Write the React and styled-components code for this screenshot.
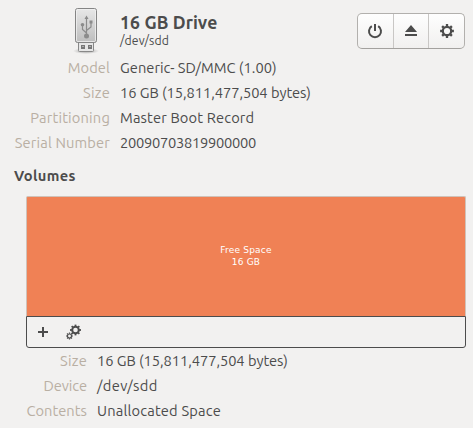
import React from 'react';
import styled, { createGlobalStyle } from 'styled-components';

const GlobalStyle = createGlobalStyle`
  * { box-sizing: border-box; }
  body {
    margin: 0;
    background: #f2f1f0;
    color: #4c4c4c;
    font: 14.67px/25px "Ubuntu", "Noto Sans", sans-serif;
  }
`;

const Panel = styled.main`
  width: 473px;
  height: 428px;
  overflow: hidden;
  display: flex;
  flex-direction: column;
`;

const Header = styled.header`
  height: 55px;
  display: flex;
  align-items: flex-start;
  flex: none;
`;

const DriveIcon = styled.svg`
  width: 36px;
  height: 50px;
  margin: 5px 0 0 68px;
  flex: none;
`;

const Heading = styled.div`
  flex: 1;
  margin: 12px 0 0 16px;
`;

const Title = styled.h1`
  margin: 0;
  font-size: 17.6px;
  line-height: 22px;
  letter-spacing: 0.12px;
`;

const Path = styled.div`
  font-size: 12.2px;
  line-height: 14px;
  letter-spacing: 0.15px;
`;

const ButtonGroup = styled.div`
  width: 108px;
  height: 36px;
  margin: 13px 8px 0 0;
  display: flex;
  border: 1px solid #b2b0ad;
  border-bottom-color: #a3a19e;
  border-radius: 5px;
  background: linear-gradient(#fefefe, #f1f0ef);
  overflow: hidden;
`;

const IconButton = styled.button`
  flex: 1;
  padding: 0;
  border: 0;
  background: none;
  color: #4c4c4c;
  display: flex;
  align-items: center;
  justify-content: center;
  & + & { border-left: 1px solid #c9c7c5; }
`;

const Details = styled.dl`
  margin: 0;
  display: grid;
  grid-template-columns: ${(p) => p.$labelWidth}px 1fr;
  grid-auto-rows: 25px;
  column-gap: 10px;
  flex: none;
`;

const Label = styled.dt`
  color: #b9afa3;
  text-align: right;
  white-space: nowrap;
  letter-spacing: ${(p) => p.$tracking}px;
`;

const Value = styled.dd`
  margin: 0;
  white-space: nowrap;
  letter-spacing: ${(p) => p.$tracking}px;
`;

const SectionTitle = styled.h2`
  margin: 8px 0 8px 14px;
  font-size: 14.67px;
  line-height: 25px;
  letter-spacing: 0.35px;
`;

const VolumeMap = styled.section`
  width: 440px;
  height: 152px;
  margin-left: 26px;
  flex: none;
  display: flex;
  flex-direction: column;
`;

const Volume = styled.div`
  height: 120px;
  border: 1px solid #d0c2b9;
  border-bottom: 0;
  border-radius: 2px 2px 0 0;
  background: #f08155;
  color: #fff;
  display: flex;
  flex-direction: column;
  align-items: center;
  justify-content: center;
  padding-bottom: 2px;
  font: 9px/12px "DejaVu Sans", sans-serif;
  letter-spacing: 0.2px;
`;

const Toolbar = styled.div`
  height: 32px;
  border: 1px solid #4c4c4c;
  border-radius: 0 0 3px 3px;
  display: flex;
  align-items: center;
  padding: 0 0 1px 10px;
  gap: 17px;
`;

const ToolButton = styled.button`
  padding: 0;
  border: 0;
  background: none;
  color: #4c4c4c;
  display: flex;
`;

function Gear({ cx, cy, r, inner, outer, width, teeth = 8, tooth = 2 }) {
  return (
    <g transform={`translate(${cx} ${cy})`} stroke="currentColor" fill="none">
      <circle r={r} strokeWidth={width} />
      {Array.from({ length: teeth }, (_, i) => (
        <path key={i} d={`M0 ${-inner}V${-outer}`} strokeWidth={tooth} transform={`rotate(${(i * 360) / teeth})`} />
      ))}
    </g>
  );
}

function UsbDrive() {
  return (
    <DriveIcon viewBox="0 0 36 50" aria-hidden="true">
      <defs>
        <linearGradient id="body" x2="0" y2="1">
          <stop stopColor="#e8e8e8" />
          <stop offset="1" stopColor="#bdbdbd" />
        </linearGradient>
        <radialGradient id="shadow">
          <stop stopColor="#888" stopOpacity=".8" />
          <stop offset="1" stopColor="#888" stopOpacity="0" />
        </radialGradient>
      </defs>
      <ellipse cx="18" cy="46" rx="13" ry="3" fill="url(#shadow)" />
      <path d="M10.5 36.5h15v9q0 1-1 1h-13q-1 0-1-1z" fill="#e6e6e6" stroke="#888" />
      <path d="M13 40h4v4h-4zM20 40h4v4h-4z" fill="#777" />
      <path d="M14 41h2v1h-2zM21 41h2v1h-2z" fill="#aaa" />
      <rect x="7.5" y="3.5" width="21" height="34" rx="2" fill="url(#body)" stroke="#858585" />
      <rect x="8.5" y="4.5" width="19" height="32" rx="1.2" fill="none" stroke="#f2f2f2" strokeOpacity=".75" />
      <g fill="none" stroke="#8b8b8b" strokeWidth="1.2">
        <path d="M18.5 13v17M18.5 28l-4-3.5v-4M18.5 25.5l4.5-3.5v-4" />
      </g>
      <g fill="#8b8b8b">
        <path d="M18.5 10.5l2 3.5h-4z" />
        <circle cx="14.5" cy="19.7" r="1.8" />
        <path d="M21.5 15.5h3v3h-3z" />
        <circle cx="18.5" cy="31" r="2.5" />
      </g>
    </DriveIcon>
  );
}

const identity = [
  ['Model', 0.1, 'Generic- SD/MMC (1.00)', 0.04],
  ['Size', 0.25, '16 GB (15,811,477,504 bytes)', -0.05],
  ['Partitioning', 0.17, 'Master Boot Record', 0.15],
  ['Serial Number', 0.15, '20090703819900000', -0.27],
];

const volume = [
  ['Size', 0.25, '16 GB (15,811,477,504 bytes)', -0.05],
  ['Device', -0.1, '/dev/sdd', 0.4],
  ['Contents', 0.05, 'Unallocated Space', 0.18],
];

function DetailList({ rows, labelWidth }) {
  return (
    <Details $labelWidth={labelWidth}>
      {rows.map(([label, labelTracking, value, valueTracking]) => (
        <React.Fragment key={label}>
          <Label $tracking={labelTracking}>{label}</Label>
          <Value $tracking={valueTracking}>{value}</Value>
        </React.Fragment>
      ))}
    </Details>
  );
}

export default function App() {
  return (
    <Panel>
      <GlobalStyle />
      <Header>
        <UsbDrive />
        <Heading>
          <Title>16 GB Drive</Title>
          <Path>/dev/sdd</Path>
        </Heading>
        <ButtonGroup>
          <IconButton aria-label="Power off">
            <svg width="16" height="16" fill="none" stroke="currentColor" strokeWidth="2">
              <path d="M4.8 3.1a6 6 0 1 0 6.4 0M8 1v7" />
            </svg>
          </IconButton>
          <IconButton aria-label="Eject">
            <svg width="16" height="16" fill="currentColor">
              <path d="M8 2l6 7H2zM2 11h12v2H2z" />
            </svg>
          </IconButton>
          <IconButton aria-label="Drive options">
            <svg width="16" height="16">
              <Gear cx={8} cy={8} r={4.2} width={2.2} inner={4.8} outer={6.9} tooth={2.3} />
            </svg>
          </IconButton>
        </ButtonGroup>
      </Header>
      <DetailList rows={identity} labelWidth={110} />
      <SectionTitle>Volumes</SectionTitle>
      <VolumeMap>
        <Volume>
          <span>Free Space</span>
          <span>16 GB</span>
        </Volume>
        <Toolbar>
          <ToolButton aria-label="Create partition">
            <svg width="12" height="12" fill="currentColor">
              <path d="M5 1h2v4h4v2H7v4H5V7H1V5h4z" />
            </svg>
          </ToolButton>
          <ToolButton aria-label="Volume options">
            <svg width="16" height="16">
              <Gear cx={9.5} cy={6} r={3.3} width={2} inner={3.7} outer={5.4} tooth={1.8} />
              <Gear cx={3.5} cy={12} r={2} width={1.1} inner={2.2} outer={3.5} tooth={1.2} />
            </svg>
          </ToolButton>
        </Toolbar>
      </VolumeMap>
      <DetailList rows={volume} labelWidth={87} />
    </Panel>
  );
}
